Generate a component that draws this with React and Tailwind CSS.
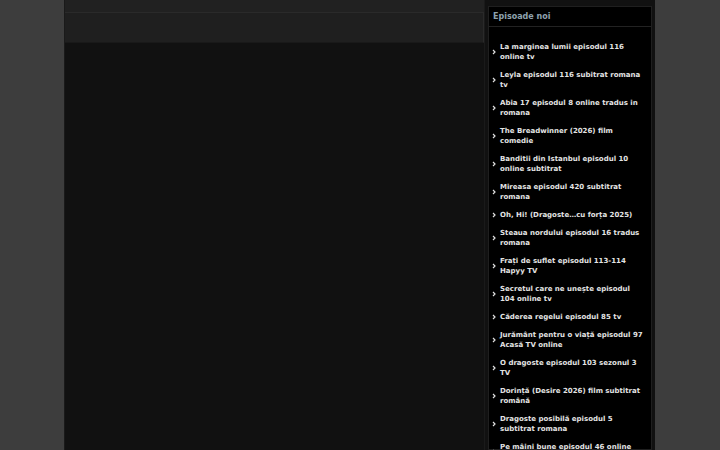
const episodes = [
  "La marginea lumii episodul 116 online tv",
  "Leyla episodul 116 subitrat romana tv",
  "Abia 17 episodul 8 online tradus in romana",
  "The Breadwinner (2026) film comedie",
  "Banditii din Istanbul episodul 10 online subtitrat",
  "Mireasa episodul 420 subtitrat romana",
  "Oh, Hi! (Dragoste…cu forța 2025)",
  "Steaua nordului episodul 16 tradus romana",
  "Frați de suflet episodul 113-114 Hapyy TV",
  "Secretul care ne unește episodul 104 online tv",
  "Căderea regelui episodul 85 tv",
  "Jurământ pentru o viață episodul 97 Acasă TV online",
  "O dragoste episodul 103 sezonul 3 TV",
  "Dorință (Desire 2026) film subtitrat română",
  "Dragoste posibilă episodul 5 subtitrat romana",
  "Pe mâini bune episodul 46 online subtitrat",
];

function Chevron() {
  return (
    <svg width="4" height="6" viewBox="0 0 4 6" className="shrink-0">
      <path d="M1 1l2 2-2 2" fill="none" stroke="#e0e0e0" strokeWidth="1.2" />
    </svg>
  );
}

export default function App() {
  return (
    <div
      className="h-[450px] overflow-hidden bg-[#3d3d3d]"
      style={{ fontFamily: '"DejaVu Sans", sans-serif' }}
    >
      <div className="ml-[64px] w-[591px] h-full flex">
        {/* main column */}
        <div className="w-[420px] h-full flex flex-col border-l border-[#1a1a1a]">
          <div className="h-[13px] bg-[#212121] border-b border-[#2a2a2a]"></div>
          <div className="h-[30px] bg-[#1f1f1f] border-b border-[#191919] border-r border-r-[#2a2a2a]"></div>
          <div className="flex-1 bg-[#111111]"></div>
        </div>

        {/* sidebar */}
        <div className="w-[171px] h-full bg-[#111111] pt-[6px] pl-[3px] pr-[3px] border-l border-[#1a1a1a]">
          <div className="h-full bg-black border border-[#1f1f1f]">
            <div className="h-[20px] flex items-center px-[4px] border-b border-[#222222]">
              <span className="text-[8px] font-bold text-[#8ea2ae] leading-none">
                Episoade noi
              </span>
            </div>
            <ul className="pt-[15px] pl-[3px] pr-[5px] flex flex-col gap-[8px]">
              {episodes.map((t) => (
                <li key={t} className="flex items-center gap-[4px]">
                  <Chevron />
                  <span className="text-[7px] leading-[10px] font-bold text-[#e4e4e4]">
                    {t}
                  </span>
                </li>
              ))}
            </ul>
          </div>
        </div>
      </div>
    </div>
  );
}
